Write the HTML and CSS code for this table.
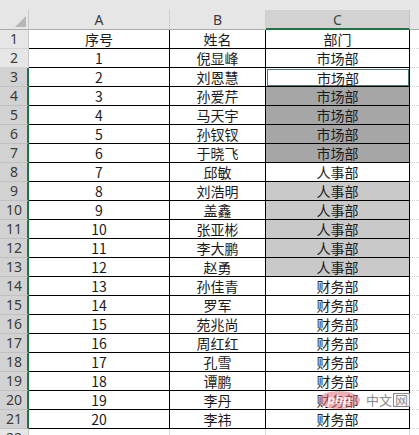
FILE: index.html
```html
<!DOCTYPE html>
<html lang="zh">
<head>
<meta charset="utf-8">
<link rel="stylesheet" href="styles.css">
</head>
<body>
<div class="sheet">
  <div class="topband"></div>
  <div class="row hdr">
    <div class="corner"><span class="tri"></span></div>
    <div class="colh">A</div>
    <div class="colh">B</div>
    <div class="colh sel">C</div>
    <div class="colh rest"></div>
  </div>
  <div class="row"><div class="rowh">1</div><div class="c">序号</div><div class="c">姓名</div><div class="c">部门</div><div class="r"></div></div>
  <div class="row"><div class="rowh">2</div><div class="c">1</div><div class="c">倪显峰</div><div class="c">市场部</div><div class="r"></div></div>
  <div class="row"><div class="rowh on">3</div><div class="c">2</div><div class="c">刘恩慧</div><div class="c active"><span class="box">市场部</span></div><div class="r"></div></div>
  <div class="row"><div class="rowh on">4</div><div class="c">3</div><div class="c">孙爱芹</div><div class="c dark">市场部</div><div class="r"></div></div>
  <div class="row"><div class="rowh on">5</div><div class="c">4</div><div class="c">马天宇</div><div class="c dark">市场部</div><div class="r"></div></div>
  <div class="row"><div class="rowh on">6</div><div class="c">5</div><div class="c">孙钗钗</div><div class="c dark">市场部</div><div class="r"></div></div>
  <div class="row"><div class="rowh on">7</div><div class="c">6</div><div class="c">于晓飞</div><div class="c dark">市场部</div><div class="r"></div></div>
  <div class="row"><div class="rowh on">8</div><div class="c">7</div><div class="c">邱敏</div><div class="c">人事部</div><div class="r"></div></div>
  <div class="row"><div class="rowh on">9</div><div class="c">8</div><div class="c">刘浩明</div><div class="c light">人事部</div><div class="r"></div></div>
  <div class="row"><div class="rowh on">10</div><div class="c">9</div><div class="c">盖鑫</div><div class="c light">人事部</div><div class="r"></div></div>
  <div class="row"><div class="rowh on">11</div><div class="c">10</div><div class="c">张亚彬</div><div class="c light">人事部</div><div class="r"></div></div>
  <div class="row"><div class="rowh on">12</div><div class="c">11</div><div class="c">李大鹏</div><div class="c light">人事部</div><div class="r"></div></div>
  <div class="row"><div class="rowh on">13</div><div class="c">12</div><div class="c">赵勇</div><div class="c light">人事部</div><div class="r"></div></div>
  <div class="row"><div class="rowh on">14</div><div class="c">13</div><div class="c">孙佳青</div><div class="c">财务部</div><div class="r"></div></div>
  <div class="row"><div class="rowh on">15</div><div class="c">14</div><div class="c">罗军</div><div class="c">财务部</div><div class="r"></div></div>
  <div class="row"><div class="rowh on">16</div><div class="c">15</div><div class="c">苑兆尚</div><div class="c">财务部</div><div class="r"></div></div>
  <div class="row"><div class="rowh on">17</div><div class="c">16</div><div class="c">周红红</div><div class="c">财务部</div><div class="r"></div></div>
  <div class="row"><div class="rowh on">18</div><div class="c">17</div><div class="c">孔雪</div><div class="c">财务部</div><div class="r"></div></div>
  <div class="row"><div class="rowh on">19</div><div class="c">18</div><div class="c">谭鹏</div><div class="c">财务部</div><div class="r"></div></div>
  <div class="row"><div class="rowh on">20</div><div class="c">19</div><div class="c">李丹</div><div class="c">财务部</div><div class="r"></div></div>
  <div class="row"><div class="rowh on">21</div><div class="c">20</div><div class="c">李祎</div><div class="c">财务部</div><div class="r"></div></div>
  <div class="row last"><div class="rowh">22</div><div class="g"></div><div class="g"></div><div class="g"></div><div class="r"></div></div>
  <div class="wm"><span class="php">php</span><span class="cn">中文<span class="boxed">网</span></span></div>
</div>
</body>
</html>
```

FILE: styles.css
```css
html, body {
  margin: 0;
  padding: 0;
  background: #ffffff;
  overflow: hidden;
}
.sheet {
  position: relative;
  width: 419px;
  height: 435px;
  overflow: hidden;
  font-family: "Noto Sans CJK SC", "Noto Sans", sans-serif;
  font-size: 14px;
  color: #1b1b1b;
}
.topband {
  height: 10px;
  background: #e6e6e6;
}
.row {
  display: grid;
  grid-template-columns: 29px 141px 96px 144px 1fr;
  height: 19px;
}
.row > div {
  box-sizing: border-box;
  display: flex;
  align-items: center;
  justify-content: center;
  line-height: 1;
}
.hdr {
  height: 20px;
}
.corner {
  background: #e6e6e6;
  border-right: 1px solid #c9c9c9;
  border-bottom: 1px solid #ababab;
  justify-content: flex-end !important;
  align-items: flex-end !important;
  padding: 0 2px 2px 0;
}
.tri {
  width: 0;
  height: 0;
  border-left: 11px solid transparent;
  border-bottom: 11px solid #b7b7b7;
}
.colh {
  background: #e6e6e6;
  border-right: 1px solid #cfcfcf;
  border-bottom: 1px solid #ababab;
  color: #3c3c3c;
  font-family: "Noto Sans", "Liberation Sans", sans-serif;
  padding-top: 1px;
}
.colh.sel {
  background: #d2d2d2;
  border-right: 1px solid #c4c4c4;
  border-bottom: 2px solid #217346;
  color: #2f4f3f;
}
.colh.rest {
  border-right: none;
}
.rowh {
  background: #e6e6e6;
  border-right: 1px solid #c6c6c6;
  border-bottom: 1px solid #d3d3d3;
  color: #3c3c3c;
  font-family: "Noto Sans", "Liberation Sans", sans-serif;
}
.rowh.on {
  background: #d2d2d2;
  border-right: 2px solid #217346;
  border-bottom: 1px solid #c0c0c0;
  padding-left: 1px;
}
.c {
  border-right: 1px solid #000;
  border-bottom: 1px solid #000;
  background: #fff;
}
.c.dark {
  background: #a6a6a6;
}
.c.light {
  background: #c9c9c9;
}
.c.active {
  padding: 1px 0 0 1px;
  align-items: stretch !important;
}
.box {
  flex: 1;
  display: flex;
  align-items: center;
  justify-content: center;
  border: 1px solid #4f7f66;
  margin-right: 0;
}
.r {
  border-bottom: 1px dotted #d6d6d6;
}
.g {
  border-right: 1px solid #dadada;
}
.last .rowh {
  background: #e6e6e6;
}
.wm {
  position: absolute;
  left: 318px;
  top: 390px;
  display: flex;
  align-items: center;
  gap: 6px;
  pointer-events: none;
}
.php {
  display: flex;
  align-items: center;
  justify-content: center;
  width: 42px;
  height: 18px;
  border-radius: 50%;
  background: rgba(230, 110, 120, 0.55);
  color: rgba(255, 255, 255, 0.85);
  font-family: "Liberation Sans", sans-serif;
  font-weight: bold;
  font-size: 13px;
  font-style: italic;
}
.cn {
  display: flex;
  align-items: center;
  color: #8a8a8a;
  font-size: 13px;
  letter-spacing: 0;
}
.boxed {
  border: 1px solid #8a8a8a;
  line-height: 12px;
  padding: 0 1px;
  margin-left: 1px;
}
```
